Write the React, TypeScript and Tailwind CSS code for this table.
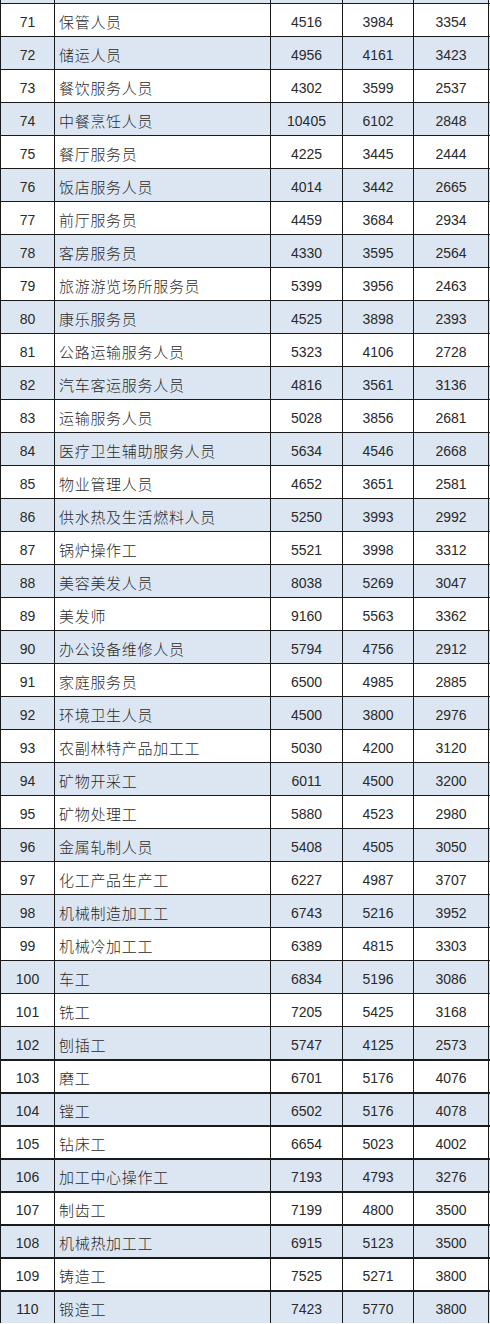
const rows: [number, string, number, number, number][] = [
  [71, "保管人员", 4516, 3984, 3354],
  [72, "储运人员", 4956, 4161, 3423],
  [73, "餐饮服务人员", 4302, 3599, 2537],
  [74, "中餐烹饪人员", 10405, 6102, 2848],
  [75, "餐厅服务员", 4225, 3445, 2444],
  [76, "饭店服务人员", 4014, 3442, 2665],
  [77, "前厅服务员", 4459, 3684, 2934],
  [78, "客房服务员", 4330, 3595, 2564],
  [79, "旅游游览场所服务员", 5399, 3956, 2463],
  [80, "康乐服务员", 4525, 3898, 2393],
  [81, "公路运输服务人员", 5323, 4106, 2728],
  [82, "汽车客运服务人员", 4816, 3561, 3136],
  [83, "运输服务人员", 5028, 3856, 2681],
  [84, "医疗卫生辅助服务人员", 5634, 4546, 2668],
  [85, "物业管理人员", 4652, 3651, 2581],
  [86, "供水热及生活燃料人员", 5250, 3993, 2992],
  [87, "锅炉操作工", 5521, 3998, 3312],
  [88, "美容美发人员", 8038, 5269, 3047],
  [89, "美发师", 9160, 5563, 3362],
  [90, "办公设备维修人员", 5794, 4756, 2912],
  [91, "家庭服务员", 6500, 4985, 2885],
  [92, "环境卫生人员", 4500, 3800, 2976],
  [93, "农副林特产品加工工", 5030, 4200, 3120],
  [94, "矿物开采工", 6011, 4500, 3200],
  [95, "矿物处理工", 5880, 4523, 2980],
  [96, "金属轧制人员", 5408, 4505, 3050],
  [97, "化工产品生产工", 6227, 4987, 3707],
  [98, "机械制造加工工", 6743, 5216, 3952],
  [99, "机械冷加工工", 6389, 4815, 3303],
  [100, "车工", 6834, 5196, 3086],
  [101, "铣工", 7205, 5425, 3168],
  [102, "刨插工", 5747, 4125, 2573],
  [103, "磨工", 6701, 5176, 4076],
  [104, "镗工", 6502, 5176, 4078],
  [105, "钻床工", 6654, 5023, 4002],
  [106, "加工中心操作工", 7193, 4793, 3276],
  [107, "制齿工", 7199, 4800, 3500],
  [108, "机械热加工工", 6915, 5123, 3500],
  [109, "铸造工", 7525, 5271, 3800],
  [110, "锻造工", 7423, 5770, 3800],
];

const cell = "flex h-full items-center border-r border-[#1a1a1a] pt-[4px]";
const num = `${cell} justify-center text-[14px] font-['Liberation_Sans',sans-serif]`;

export default function App() {
  return (
    <div className="min-h-[1324px] w-[490px] overflow-hidden bg-white text-[#2a2a2a] font-['Noto_Sans_CJK_SC',sans-serif]">
      {/* tail of the previous row */}
      <div className="flex h-[3px] border-l border-[#1a1a1a]">
        <div className="h-full w-[54px] border-r border-[#1a1a1a] bg-[#dce6f2]" />
        <div className="h-full w-[216px] border-r border-[#1a1a1a] bg-[#dce6f2]" />
        <div className="h-full w-[72px] border-r border-[#1a1a1a] bg-[#dce6f2]" />
        <div className="h-full w-[71px] border-r border-[#1a1a1a] bg-[#dce6f2]" />
        <div className="h-full w-[75px] border-r border-[#1a1a1a] bg-[#dce6f2]" />
      </div>
      {rows.map(([id, name, a, b, c]) => (
        <div
          key={id}
          className={`flex h-[33px] border-l border-[#1a1a1a] ${id >= 103 ? "border-t-2" : "border-t"} border-t-[#1a1a1a] ${
            id % 2 === 0 ? "bg-[#dce6f2]" : "bg-white"
          }`}
        >
          <div className={`${num} w-[54px]`}>{id}</div>
          <div className={`${cell} w-[216px] pl-[4px] text-[15px] font-light tracking-[0.7px] whitespace-nowrap`}>
            {name}
          </div>
          <div className={`${num} w-[72px]`}>{a}</div>
          <div className={`${num} w-[71px]`}>{b}</div>
          <div className={`${num} w-[75px]`}>{c}</div>
        </div>
      ))}
    </div>
  );
}
